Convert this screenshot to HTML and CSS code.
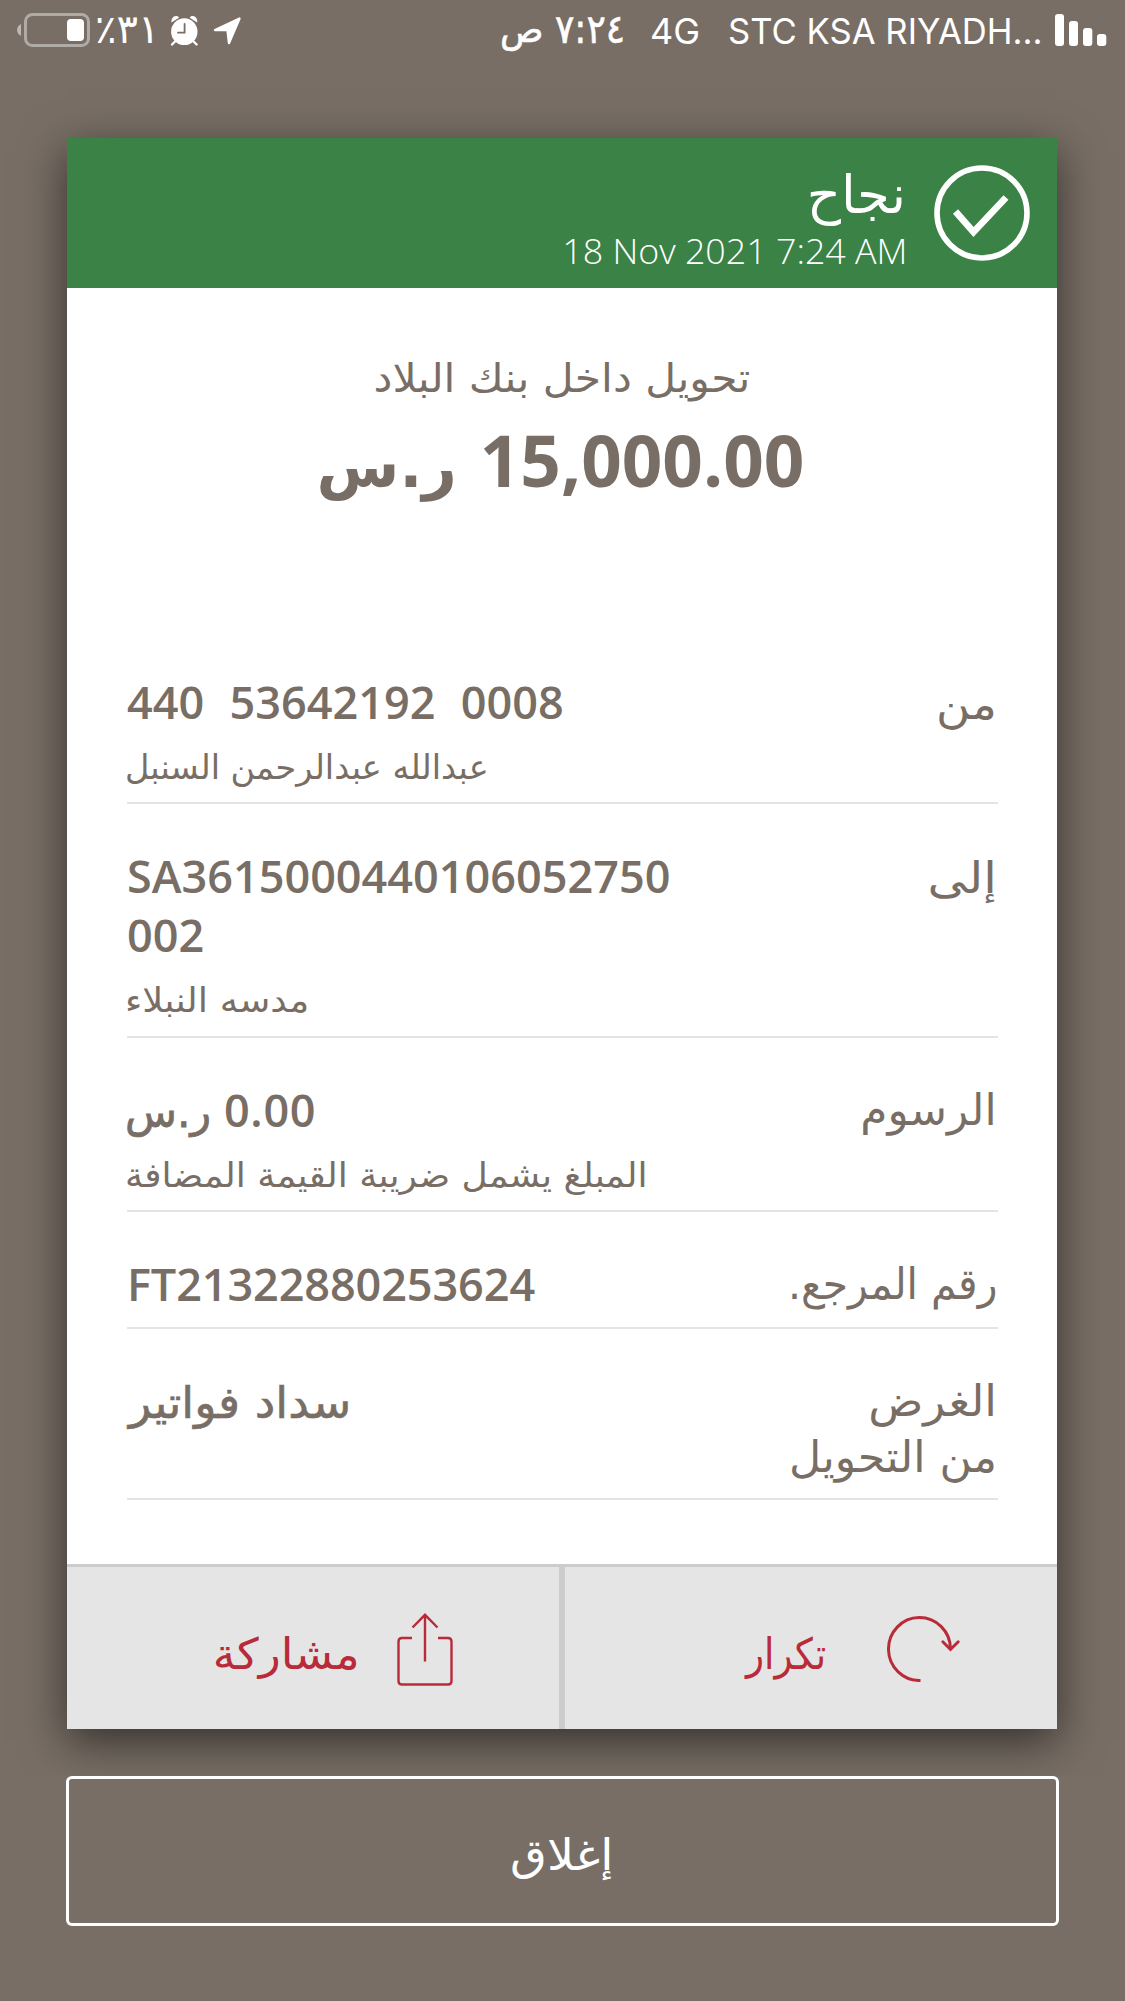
FILE: index.html
```
<!DOCTYPE html>
<html lang="ar" dir="rtl">
<head>
<meta charset="utf-8">
<meta name="viewport" content="width=device-width, initial-scale=1">
<title>نجاح</title>
<link rel="stylesheet" href="styles.css">
</head>
<body>
<header class="status" dir="ltr">
  <svg class="battery" width="75" height="36" viewBox="0 0 75 36" aria-hidden="true">
    <path d="M4 12v12c-2-1-4-3-4-6s2-5 4-6z" fill="#fff" fill-opacity=".5"/>
    <rect x="8.5" y="2.5" width="63" height="31" rx="7" fill="none" stroke="#fff" stroke-opacity=".42" stroke-width="3"/>
    <rect x="50" y="7" width="17" height="22" rx="4" fill="#fff"/>
  </svg>
  <span class="percent"><bdo dir="ltr">٪٣١</bdo></span>
  <svg class="alarm" width="29" height="32" viewBox="0 0 29 32" aria-hidden="true">
    <g fill="#fff">
      <ellipse cx="14.3" cy="16.7" rx="13.2" ry="13.4"/>
      <path d="M1.500 7.500C1 4 3 1 6 1c1.500 0 2.500.7 3 1.700z"/>
      <path d="M27.200 7.500C27.700 4 25.700 1 22.700 1c-1.500 0-2.500.7-3 1.700z"/>
    </g>
    <path d="M5 26.500l-3 3M23.600 26.500l3 3" stroke="#fff" stroke-width="2.400" stroke-linecap="round"/>
    <path d="M14.600 9v8.700H8" fill="none" stroke="#786e65" stroke-width="1.800" stroke-linecap="round"/>
  </svg>
  <svg class="location" width="30" height="30" viewBox="0 0 30 30" aria-hidden="true">
    <path d="M26.500 2.500L2 14h12.500l1.500 13z" fill="#fff" stroke="#fff" stroke-width="2.400" stroke-linejoin="round"/>
  </svg>
  <span class="meridiem">ص</span>
  <span class="time"><bdo dir="ltr">٧:٢٤</bdo></span>
  <span class="network">4G</span>
  <span class="carrier">STC KSA RIYADH...</span>
  <svg class="signal" width="52" height="33" viewBox="0 0 52 33" fill="#fff" aria-hidden="true">
    <rect x="0" y="0" width="9" height="32" rx="3"/>
    <rect x="14" y="7" width="9" height="25" rx="3"/>
    <rect x="28" y="14" width="9.300" height="18" rx="3"/>
    <rect x="42" y="20" width="9.300" height="12" rx="3"/>
  </svg>
</header>

<main class="card">
  <section class="result">
    <svg class="check" width="96" height="96" viewBox="0 0 96 96" fill="none" stroke="#fff" aria-hidden="true">
      <circle cx="48" cy="48" r="45" stroke-width="5.600"/>
      <path d="M21.500 46.500L39.500 67 72 32.500" stroke-width="6.800"/>
    </svg>
    <div class="result-text">
      <h1>نجاح</h1>
      <p dir="ltr">18 Nov 2021 7:24 AM</p>
    </div>
  </section>

  <section class="summary">
    <h2>تحويل داخل بنك البلاد</h2>
    <p class="total"><span class="figure">15,000.00</span><span class="currency">ر.س</span></p>
  </section>

  <dl class="details">
    <div class="row">
      <dt class="low"><span class="label w-from">من</span></dt>
      <dd>
        <span class="value spaced" dir="ltr">440  53642192  0008</span>
        <span class="note n-name">عبدالله عبدالرحمن السنبل</span>
      </dd>
    </div>
    <div class="row tall">
      <dt class="low"><span class="label w-to">إلى</span></dt>
      <dd>
        <span class="value" dir="ltr">SA3615000440106052750<br>002</span>
        <span class="note n-school">مدسه النبلاء</span>
      </dd>
    </div>
    <div class="row">
      <dt><span class="label w-fees">الرسوم</span></dt>
      <dd>
        <span class="fee"><span class="value zero">0.00</span><span class="unit">ر.س</span></span>
        <span class="note n-vat">المبلغ يشمل ضريبة القيمة المضافة</span>
      </dd>
    </div>
    <div class="row short">
      <dt><span class="label w-ref">رقم المرجع.</span></dt>
      <dd><span class="value ref" dir="ltr">FT21322880253624</span></dd>
    </div>
    <div class="row purpose">
      <dt><span class="label w-purpose">الغرض</span><span class="label w-transfer">من التحويل</span></dt>
      <dd><span class="value-ar">سداد فواتير</span></dd>
    </div>
  </dl>

  <footer class="actions">
    <button class="action repeat" type="button">
      <svg width="74" height="66" viewBox="0 0 74 66" fill="none" stroke="#b92b38" stroke-width="3" aria-hidden="true">
        <path d="M33.500 64.500A31 31.500 0 1 1 63.500 33"/>
        <path d="M55.800 25.800l7.700 7.700 7.700-7.700" stroke-linecap="round"/>
      </svg>
      <span class="w-repeat">تكرار</span>
    </button>
    <button class="action share" type="button">
      <svg width="58" height="74" viewBox="0 0 58 74" fill="none" stroke="#b92b38" stroke-width="2.400" aria-hidden="true">
        <path d="M16 26H6q-3.500 0-3.500 3.500v39.500q0 3.500 3.500 3.500h46q3.500 0 3.500-3.500V29.500q0-3.500-3.500-3.500H42"/>
        <path d="M29 2.500v47M16.500 15.500L29 2.800l12.500 12.700"/>
      </svg>
      <span class="w-share">مشاركة</span>
    </button>
  </footer>
</main>

<div class="bottom">
  <button class="close" type="button"><span>إغلاق</span></button>
</div>
</body>
</html>
```
FILE: styles.css
```
:root {
  --taupe: #786e65;
  --green: #3a8245;
  --red: #b92b38;
  --arabic: "DejaVu Sans", sans-serif;
  --latin: "Open Sans", "Noto Sans", sans-serif;
}

* { box-sizing: border-box; margin: 0; padding: 0; }

body {
  height: 2001px;
  overflow: hidden;
  background: var(--taupe);
  color: var(--taupe);
  font-family: var(--arabic);
}

button { border: 0; background: none; font-family: var(--arabic); }

/* status bar */
.status {
  display: flex;
  align-items: flex-start;
  height: 64px;
  padding-left: 17px;
  color: #fff;
  line-height: 60px;
  white-space: nowrap;
}
.status > * { flex: none; transform-origin: left center; }
.battery { margin-top: 12px; }
.percent { width: 57px; margin: -1px 0 0 3px; font-size: 40px; }
.alarm { margin: 15px 0 0 18px; }
.location { margin: 16px 0 0 14px; }
.meridiem { width: 44px; margin: 0 0 0 257px; font-size: 36px; -webkit-text-stroke: .6px currentColor; }
.time { width: 70px; margin: -1px 0 0 11px; font-size: 40px; transform: scaleX(.9); -webkit-text-stroke: .6px currentColor; }
.network { width: 50px; margin: 1px 0 0 25px; font: 400 36px/60px Inter, sans-serif; }
.carrier { width: 316px; margin: 1px 0 0 28px; font: 400 36px/60px Inter, sans-serif; transform: scaleX(.962); }
.signal { margin: 14px 0 0 11px; }

/* receipt card */
.card {
  display: flex;
  flex-direction: column;
  width: 990px;
  height: 1591px;
  margin: 74px 68px 0 67px;
  background: #fff;
  box-shadow: 0 13px 42px rgba(0, 0, 0, .56);
}

.result {
  display: flex;
  gap: 28px;
  height: 150px;
  padding: 27px 27px 0 0;
  background: var(--green);
  color: #fff;
}
.result h1 { font-weight: 400; font-size: 53px; line-height: 60px; }
.result p { margin: 3px -1.500px 0 0; font: 300 35.800px/44px var(--latin); }

.summary { height: 342px; padding-top: 60px; text-align: center; }
.summary h2 { font-weight: 400; font-size: 40px; line-height: 60px; transform: scaleX(1.061); }
.total {
  display: flex;
  justify-content: center;
  align-items: baseline;
  gap: 23px;
  height: 90px;
  margin-top: 7px;
  padding-right: 3px;
  font-weight: 700;
  line-height: 90px;
}
.figure { font-family: var(--latin); font-size: 71px; }
.currency { font-size: 60px; }

/* detail rows */
.details { padding: 0 59px 0 60px; }
.row {
  display: flex;
  justify-content: space-between;
  height: 174px;
  padding-top: 42px;
  border-bottom: 2px solid #e4e4e4;
  white-space: nowrap;
}
.row.tall { height: 234px; }
.row.short { height: 117px; }
.row.purpose { height: 171px; }
dt { display: flex; flex-direction: column; padding: 2px 1px 0 0; }
dt.low { padding-top: 4px; }
dd { display: flex; flex-direction: column; align-items: flex-end; }
.label { font-size: 43px; line-height: 56px; transform-origin: right center; }
.value { font: 540 45px/59px var(--latin); }
.spaced { white-space: pre; word-spacing: 1px; }
.ref { letter-spacing: -.1px; }
.zero { letter-spacing: .7px; }
.note { margin: 14px 0 -1px -2px; font-size: 34px; line-height: 44px; transform-origin: left center; }
.fee { display: flex; align-items: baseline; gap: 13px; height: 59px; margin-left: -2px; }
.unit { font-size: 42.500px; line-height: 59px; -webkit-text-stroke: .8px currentColor; }
.value-ar {
  margin: 2px 0 0 2px;
  font-size: 44px;
  line-height: 59px;
  transform: scaleX(1.05);
  transform-origin: left center;
  -webkit-text-stroke: .6px currentColor;
}

.w-from { transform: scaleX(1.09); }
.w-to { transform: scaleX(1.14); }
.w-fees { transform: scaleX(1.02); }
.w-ref { transform: scaleX(.95); }
.w-purpose { transform: scaleX(1.06); }
.w-transfer { transform: scaleX(1.03); }
.n-name { transform: scaleX(.985); }
.n-school { transform: scaleX(1.083); }
.n-vat { transform: scaleX(1.062); }

/* card actions */
.actions {
  display: grid;
  grid-template-columns: 1fr 1fr;
  gap: 6px;
  height: 165px;
  margin-top: auto;
  padding-top: 3px;
  background: #ccc;
}
.action {
  display: flex;
  align-items: center;
  background: #e5e5e5;
  color: var(--red);
  font-size: 43px;
  line-height: 60px;
}
.action svg { margin-top: 2px; }
.action span { padding-top: 11px; transform-origin: right center; }
.repeat { gap: 61px; padding-right: 96px; }
.share { gap: 36px; padding-right: 105px; }
.w-repeat { transform: scaleX(.87); }
.w-share { transform: scaleX(1.06); }

/* close button */
.bottom {
  position: relative;
  margin-top: 47px;
  height: 225px;
  padding: 0 66px;
  background: var(--taupe);
}
.close {
  display: block;
  width: 993px;
  height: 150px;
  padding: 7px 2px 0 0;
  border: 3px solid #fff;
  border-radius: 6px;
  color: #fff;
  font-size: 43px;
  line-height: 60px;
}
.close span { display: inline-block; transform: scaleX(1.105); }
```
